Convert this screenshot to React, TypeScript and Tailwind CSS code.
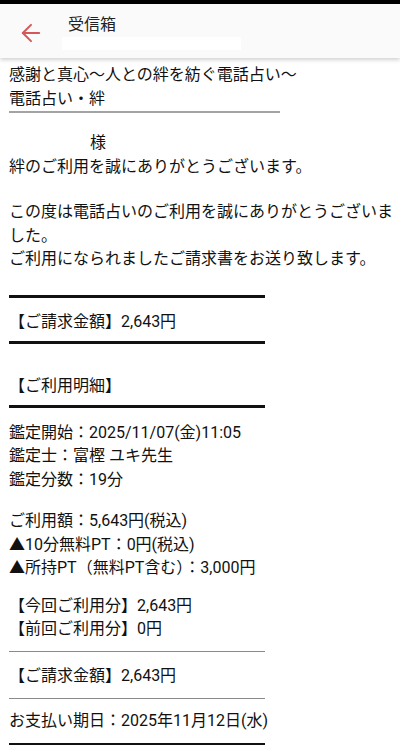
import { ArrowLeft } from "lucide-react";

const Thick = ({ className = "" }: { className?: string }) => (
  <div className={`h-[3px] w-[256px] bg-[#111] ${className}`} />
);

const Thin = ({ className = "" }: { className?: string }) => (
  <div className={`h-px w-[256px] bg-[#8a8a8a] ${className}`} />
);

export default function App() {
  return (
    <div
      className="w-[400px] h-[745px] overflow-hidden bg-white text-[#111] text-[16px]"
      style={{ fontFamily: 'Roboto, "Noto Sans CJK JP", sans-serif' }}
    >
      <div className="h-[4px] bg-black" />
      <div className="relative z-10 flex h-[54px] items-start bg-[#fafafa] shadow-[0_2px_4px_rgba(0,0,0,0.18)]">
        <div className="flex h-full w-[62px] items-center justify-center pt-[4px]">
          <ArrowLeft size={28} strokeWidth={1.7} color="#d4575a" />
        </div>
        <div className="flex flex-col pt-[11px]">
          <span className="pl-[6px] text-[16px] leading-[20px] text-[#222]">受信箱</span>
          <div className="mt-[2px] h-[13px] w-[179px] bg-white" />
        </div>
      </div>

      <div className="pl-[9px] whitespace-nowrap">
        <div className="mt-[5px] leading-[24px]">
          <div>感謝と真心〜人との絆を紡ぐ電話占い〜</div>
          <div>電話占い・絆</div>
        </div>
        <div className="h-[2px] w-[271px] bg-[#a3a3a3]" />

        <div className="mt-[18px] leading-[24px]">
          <div className="pl-[81px]">様</div>
          <div>絆のご利用を誠にありがとうございます。</div>
        </div>

        <div className="mt-[21px] leading-[23.5px]">
          <div>この度は電話占いのご利用を誠にありがとうございま</div>
          <div>した。</div>
          <div>ご利用になられましたご請求書をお送り致します。</div>
        </div>

        <Thick className="mt-[24px]" />
        <div className="mt-[12px] leading-[24px]">【ご請求金額】2,643円</div>
        <Thick className="mt-[7px]" />

        <div className="mt-[30px] leading-[24px]">【ご利用明細】</div>
        <Thick className="mt-[7px]" />

        <div className="mt-[13px] leading-[23.5px]">
          <div>鑑定開始：2025/11/07(金)11:05</div>
          <div>鑑定士：富樫 ユキ先生</div>
          <div>鑑定分数：19分</div>
        </div>

        <div className="mt-[18px] leading-[23.5px]">
          <div>ご利用額：5,643円(税込)</div>
          <div>▲10分無料PT：0円(税込)</div>
          <div>▲所持PT（無料PT含む）：3,000円</div>
        </div>

        <div className="mt-[14px] leading-[23.5px]">
          <div>【今回ご利用分】2,643円</div>
          <div>【前回ご利用分】0円</div>
        </div>

        <Thin className="mt-[10px]" />
        <div className="mt-[12px] leading-[24px]">【ご請求金額】2,643円</div>
        <Thin className="mt-[10px]" />
        <div className="mt-[10px] leading-[24px]">お支払い期日：2025年11月12日(水)</div>
        <Thick className="mt-[10px]" />
      </div>
    </div>
  );
}
